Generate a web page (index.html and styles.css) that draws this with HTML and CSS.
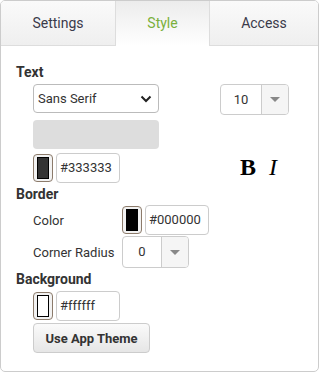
FILE: index.html
```html
<!DOCTYPE html>
<html lang="en">
<head>
  <meta charset="UTF-8">
  <title>Style Panel</title>
  <link rel="stylesheet" href="styles.css">
</head>
<body>

<div class="panel">
  <div class="tabs">
    <div class="tab">Settings</div>
    <div class="tab active">Style</div>
    <div class="tab last">Access</div>
  </div>

  <div class="content">
    <h3 class="section">Text</h3>
    <div class="text-grid">
      <div class="select">
        <span>Sans Serif</span>
        <svg width="12" height="8" viewBox="0 0 12 8"><path d="M1.5 1.5 L6 6 L10.5 1.5" fill="none" stroke="#222" stroke-width="2"/></svg>
      </div>
      <div class="spinner size">
        <span class="value">10</span>
        <span class="arrow"><i></i></span>
      </div>
      <div class="preview"></div>
      <div></div>
      <div class="color-row">
        <span class="swatch"><b style="background:#333333"></b></span>
        <span class="hex">#333333</span>
      </div>
      <div class="font-style">
        <span class="bold">B</span>
        <span class="italic">I</span>
      </div>
    </div>

    <h3 class="section">Border</h3>
    <div class="border-grid">
      <label>Color</label>
      <div class="color-row">
        <span class="swatch"><b style="background:#000000"></b></span>
        <span class="hex">#000000</span>
      </div>
      <label>Corner Radius</label>
      <div class="spinner radius">
        <span class="value">0</span>
        <span class="arrow"><i></i></span>
      </div>
    </div>

    <h3 class="section">Background</h3>
    <div class="bg-block">
      <div class="color-row">
        <span class="swatch"><b style="background:#ffffff"></b></span>
        <span class="hex">#ffffff</span>
      </div>
      <button class="theme-btn">Use App Theme</button>
    </div>
  </div>
</div>

</body>
</html>
```

FILE: styles.css
```css
body {
  margin: 0;
  font-family: Roboto, "Liberation Sans", sans-serif;
  font-size: 13px;
  color: #333;
  background: #fff;
}
.panel {
  width: 319px;
  height: 372px;
  box-sizing: border-box;
  border: 1px solid #ccc;
  border-radius: 5px;
  overflow: hidden;
  background: #fff;
}
.tabs {
  display: flex;
  height: 45px;
}
.tab {
  width: 114px;
  border-right: 1px solid #ddd;
  border-bottom: 1px solid #ddd;
  background: linear-gradient(#fafafa, #efefef);
  color: #3a3a4a;
  font-size: 14px;
  line-height: 44px;
  text-align: center;
}
.tab.active {
  width: 93px;
  border-bottom: none;
  background: linear-gradient(#ececec, #fff);
  color: #7ab03c;
}
.tab.last {
  flex: 1;
  border-right: none;
  border-left: none;
}
.content {
  padding: 17px 15px 0 15px;
}
.section {
  margin: 2px 0 0;
  font-size: 14px;
  font-weight: bold;
  line-height: 18px;
  color: #333;
}
.section:first-child {
  margin-top: 0;
}
.text-grid {
  display: grid;
  grid-template-columns: 126px 69px;
  column-gap: 61px;
  row-gap: 4px;
  margin-top: 3px;
  padding-left: 17px;
  align-items: start;
}
.select {
  height: 29px;
  box-sizing: border-box;
  border: 1px solid #bbb;
  border-radius: 4px;
  display: flex;
  align-items: center;
  justify-content: space-between;
  padding: 0 6px 0 4px;
  color: #333;
}
.spinner {
  display: flex;
  height: 31px;
  box-sizing: border-box;
  border: 1px solid #ccc;
  border-radius: 4px;
  overflow: hidden;
}
.spinner .value {
  flex: 1;
  text-align: center;
  line-height: 29px;
  color: #333;
}
.spinner .arrow {
  width: 26px;
  border-left: 1px solid #ccc;
  background: #f5f5f5;
  display: flex;
  align-items: center;
  justify-content: center;
}
.spinner .arrow i {
  width: 0;
  height: 0;
  border-left: 5px solid transparent;
  border-right: 5px solid transparent;
  border-top: 5px solid #888;
}
.spinner.radius {
  width: 67px;
  height: 32px;
}
.preview {
  height: 29px;
  margin-top: 1px;
  background: #ddd;
  border-radius: 4px;
}
.color-row {
  display: flex;
  align-items: center;
  gap: 3px;
  height: 30px;
}
.swatch {
  width: 20px;
  height: 28px;
  box-sizing: border-box;
  border: 1px solid #8c7b6b;
  border-radius: 4px;
  background: #f2f2f2;
  padding: 2px 3px;
  display: flex;
}
.swatch b {
  flex: 1;
  border: 1px solid #000;
}
.hex {
  width: 64px;
  height: 30px;
  box-sizing: border-box;
  border: 1px solid #ccc;
  border-radius: 4px;
  padding: 0 3px;
  line-height: 28px;
  color: #333;
}
.font-style {
  display: flex;
  gap: 13px;
  padding: 1px 0 0 20px;
  font-family: "Liberation Serif", serif;
  font-size: 24px;
  color: #000;
}
.bold {
  font-weight: bold;
}
.italic {
  font-style: italic;
}
.border-grid {
  display: grid;
  grid-template-columns: 89px auto;
  row-gap: 1px;
  margin-top: 2px;
  padding-left: 17px;
  align-items: center;
  justify-items: start;
}
.border-grid label {
  color: #333;
}
.bg-block {
  margin-top: 3px;
  padding-left: 17px;
}
.theme-btn {
  display: block;
  margin-top: 2px;
  width: 117px;
  height: 30px;
  border: 1px solid #ccc;
  border-radius: 4px;
  background: linear-gradient(#fafafa, #e6e6e6);
  font-family: Roboto, "Liberation Sans", sans-serif;
  font-size: 13px;
  font-weight: bold;
  color: #333;
}
```
